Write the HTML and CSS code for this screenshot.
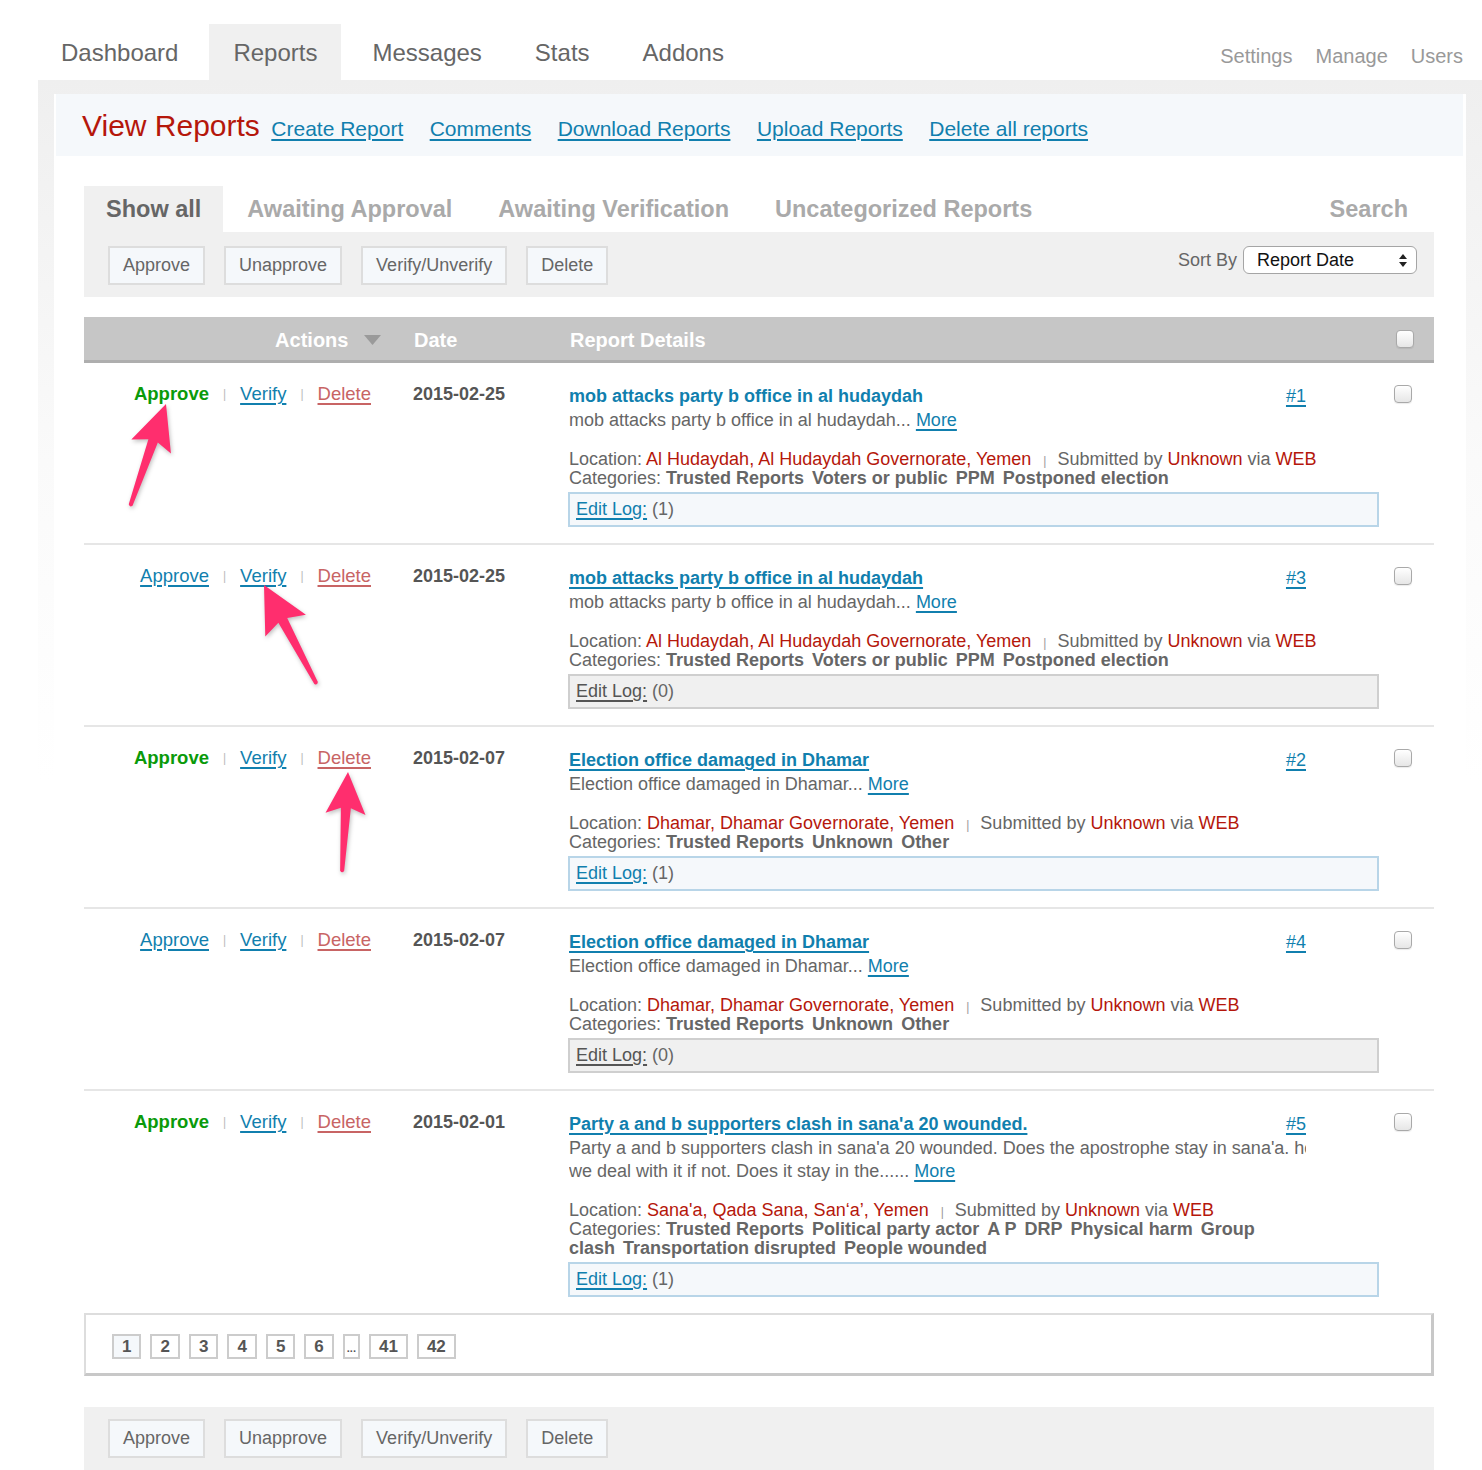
FILE: index.html
```html
<!DOCTYPE html>
<html lang="en">
<head>
<meta charset="utf-8">
<title>View Reports</title>
<link rel="stylesheet" href="styles.css">
</head>
<body>
<nav class="topnav">
  <div class="tabs">
    <a class="tab">Dashboard</a>
    <a class="tab active">Reports</a>
    <a class="tab">Messages</a>
    <a class="tab">Stats</a>
    <a class="tab">Addons</a>
  </div>
  <div class="util">
    <a>Settings</a>
    <a>Manage</a>
    <a>Users</a>
  </div>
</nav>

<div class="wrapper">
  <div class="panel">
    <div class="pagehead">
      <h1>View Reports</h1>
      <a class="hl first">Create Report</a>
      <a class="hl">Comments</a>
      <a class="hl">Download Reports</a>
      <a class="hl">Upload Reports</a>
      <a class="hl">Delete all reports</a>
    </div>

    <div class="filters">
      <a class="ftab active">Show all</a>
      <a class="ftab">Awaiting Approval</a>
      <a class="ftab">Awaiting Verification</a>
      <a class="ftab">Uncategorized Reports</a>
      <a class="ftab search">Search</a>
    </div>

    <div class="actionbar">
      <span class="btn">Approve</span>
      <span class="btn">Unapprove</span>
      <span class="btn">Verify/Unverify</span>
      <span class="btn">Delete</span>
      <div class="sort">
        <span>Sort By</span>
        <div class="select">
          <span>Report Date</span>
          <svg width="8" height="13" viewBox="0 0 8 13"><polygon points="4,0 8,5 0,5" fill="#222"/><polygon points="0,8 8,8 4,13" fill="#222"/></svg>
        </div>
      </div>
    </div>

    <div class="thead">
      <div class="th th-act">Actions <svg class="caret" width="17" height="10" viewBox="0 0 17 10"><polygon points="0,0 17,0 8.5,10" fill="#9a9a9a"/></svg></div>
      <div class="th th-date">Date</div>
      <div class="th th-det">Report Details</div>
      <div class="th th-chk"><span class="chk"></span></div>
    </div>

    <div class="row">
      <div class="acts"><span class="ok">Approve</span><span class="sep">|</span><a class="lnk">Verify</a><span class="sep">|</span><a class="del">Delete</a></div>
      <div class="date">2015-02-25</div>
      <div class="det">
        <div class="trow"><a class="title plain">mob attacks party b office in al hudaydah</a><a class="num">#1</a></div>
        <div class="desc"><div class="desc-in">mob attacks party b office in al hudaydah... <a class="lnk">More</a></div></div>
        <div class="meta">Location: <span class="red">Al Hudaydah, Al Hudaydah Governorate, Yemen</span><span class="msep">|</span>Submitted by <span class="red">Unknown</span> via <span class="red">WEB</span></div>
        <div class="cats">Categories: <b>Trusted Reports</b> <b>Voters or public</b> <b>PPM</b> <b>Postponed election</b></div>
        <div class="editlog"><a class="lnk">Edit Log:</a> (1)</div>
      </div>
      <div class="chkcell"><span class="chk"></span></div>
    </div>

    <div class="row">
      <div class="acts"><a class="lnk">Approve</a><span class="sep">|</span><a class="lnk">Verify</a><span class="sep">|</span><a class="del">Delete</a></div>
      <div class="date">2015-02-25</div>
      <div class="det">
        <div class="trow"><a class="title">mob attacks party b office in al hudaydah</a><a class="num">#3</a></div>
        <div class="desc"><div class="desc-in">mob attacks party b office in al hudaydah... <a class="lnk">More</a></div></div>
        <div class="meta">Location: <span class="red">Al Hudaydah, Al Hudaydah Governorate, Yemen</span><span class="msep">|</span>Submitted by <span class="red">Unknown</span> via <span class="red">WEB</span></div>
        <div class="cats">Categories: <b>Trusted Reports</b> <b>Voters or public</b> <b>PPM</b> <b>Postponed election</b></div>
        <div class="editlog empty"><a class="lnk">Edit Log:</a> (0)</div>
      </div>
      <div class="chkcell"><span class="chk"></span></div>
    </div>

    <div class="row">
      <div class="acts"><span class="ok">Approve</span><span class="sep">|</span><a class="lnk">Verify</a><span class="sep">|</span><a class="del">Delete</a></div>
      <div class="date">2015-02-07</div>
      <div class="det">
        <div class="trow"><a class="title">Election office damaged in Dhamar</a><a class="num">#2</a></div>
        <div class="desc"><div class="desc-in">Election office damaged in Dhamar... <a class="lnk">More</a></div></div>
        <div class="meta">Location: <span class="red">Dhamar, Dhamar Governorate, Yemen</span><span class="msep">|</span>Submitted by <span class="red">Unknown</span> via <span class="red">WEB</span></div>
        <div class="cats">Categories: <b>Trusted Reports</b> <b>Unknown</b> <b>Other</b></div>
        <div class="editlog"><a class="lnk">Edit Log:</a> (1)</div>
      </div>
      <div class="chkcell"><span class="chk"></span></div>
    </div>

    <div class="row">
      <div class="acts"><a class="lnk">Approve</a><span class="sep">|</span><a class="lnk">Verify</a><span class="sep">|</span><a class="del">Delete</a></div>
      <div class="date">2015-02-07</div>
      <div class="det">
        <div class="trow"><a class="title">Election office damaged in Dhamar</a><a class="num">#4</a></div>
        <div class="desc"><div class="desc-in">Election office damaged in Dhamar... <a class="lnk">More</a></div></div>
        <div class="meta">Location: <span class="red">Dhamar, Dhamar Governorate, Yemen</span><span class="msep">|</span>Submitted by <span class="red">Unknown</span> via <span class="red">WEB</span></div>
        <div class="cats">Categories: <b>Trusted Reports</b> <b>Unknown</b> <b>Other</b></div>
        <div class="editlog empty"><a class="lnk">Edit Log:</a> (0)</div>
      </div>
      <div class="chkcell"><span class="chk"></span></div>
    </div>

    <div class="row last">
      <div class="acts"><span class="ok">Approve</span><span class="sep">|</span><a class="lnk">Verify</a><span class="sep">|</span><a class="del">Delete</a></div>
      <div class="date">2015-02-01</div>
      <div class="det">
        <div class="trow"><a class="title">Party a and b supporters clash in sana'a 20 wounded.</a><a class="num">#5</a></div>
        <div class="desc"><div class="desc-in">Party a and b supporters clash in sana'a 20 wounded. Does the apostrophe stay in sana'a. how we deal with it if not. Does it stay in the...... <a class="lnk">More</a></div></div>
        <div class="meta">Location: <span class="red">Sana'a, Qada Sana, San‘a’, Yemen</span><span class="msep">|</span>Submitted by <span class="red">Unknown</span> via <span class="red">WEB</span></div>
        <div class="cats">Categories: <b>Trusted Reports</b> <b>Political party actor</b> <b>A P</b> <b>DRP</b> <b>Physical harm</b> <b>Group clash</b> <b>Transportation disrupted</b> <b>People wounded</b></div>
        <div class="editlog"><a class="lnk">Edit Log:</a> (1)</div>
      </div>
      <div class="chkcell"><span class="chk"></span></div>
    </div>

    <div class="pager">
      <span class="pg cur">1</span>
      <span class="pg">2</span>
      <span class="pg">3</span>
      <span class="pg">4</span>
      <span class="pg">5</span>
      <span class="pg">6</span>
      <span class="pg dots">...</span>
      <span class="pg">41</span>
      <span class="pg">42</span>
    </div>

    <div class="actionbar bottom">
      <span class="btn">Approve</span>
      <span class="btn">Unapprove</span>
      <span class="btn">Verify/Unverify</span>
      <span class="btn">Delete</span>
    </div>
  </div>
</div>

<svg class="arrows" width="1482" height="1470" viewBox="0 0 1482 1470">
  <g fill="#ff2e6e">
    <path transform="translate(166,404) rotate(19.3)" d="M0,0 L21,45 L5,39 L2,107 Q0,110 -2,107 L-5,39 L-21,45 Z"/>
    <path transform="translate(264,585) rotate(-28)" d="M0,0 L23,46 L5,40 L2,111 Q0,114 -2,111 L-5,40 L-23,46 Z"/>
    <path transform="translate(348,772) rotate(3.4)" d="M0,0 L20,42 L5,36 L2,99 Q0,102 -2,99 L-5,36 L-20,42 Z"/>
  </g>
</svg>
</body>
</html>
```
FILE: styles.css
```css
body {
  margin: 0;
  font-family: "Liberation Sans", Arial, sans-serif;
  color: #666;
  background: #fff;
  position: relative;
}
a { text-decoration: none; cursor: pointer; }

/* top navigation */
.topnav {
  display: flex;
  justify-content: space-between;
  align-items: flex-end;
  padding: 24px 19px 0 39px;
}
.tabs { display: flex; gap: 9px; }
.tab {
  height: 56px;
  line-height: 58px;
  padding: 0 22px;
  font-size: 24px;
  color: #666;
}
.tab.active { background: #f0f0f0; padding: 0 24px; }
.util {
  display: flex;
  gap: 23px;
  padding-bottom: 12px;
  font-size: 20px;
}
.util a { color: #999; }

/* wrapper */
.wrapper {
  margin-left: 38px;
  padding: 14px 16px 0;
  background: linear-gradient(#efefef 0, #fafafa 380px, #fff 700px);
}
.panel {
  background: #fff;
  padding: 0 32px 0 30px;
}
.pagehead {
  margin: 0 -29px 0 -28px;
  height: 62px;
  line-height: 64px;
  background: #f5f8fb;
  padding-left: 26px;
  white-space: nowrap;
}
.pagehead h1 {
  display: inline;
  margin: 0;
  font-size: 30px;
  font-weight: normal;
  color: #b5170b;
}
.hl {
  font-size: 21px;
  color: #117fae;
  margin-left: 22px;
  text-decoration: underline;
  text-decoration-thickness: 2px;
  text-underline-offset: 3px;
}
.hl.first { margin-left: 7px; }

/* filter tabs */
.filters {
  margin-top: 30px;
  display: flex;
  gap: 2px;
}
.ftab {
  height: 46px;
  line-height: 46px;
  padding: 0 22px;
  font-size: 23.5px;
  font-weight: bold;
  color: #aaa;
}
.ftab.active { background: #f0f0f0; color: #666; }
.ftab.search { margin-left: auto; padding-right: 26px; }

/* action bar */
.actionbar {
  background: #f0f0f0;
  display: flex;
  align-items: flex-start;
  gap: 19px;
  padding: 14px 17px 12px 24px;
}
.btn {
  height: 39px;
  box-sizing: border-box;
  border: 2px solid #ddd;
  background: #f5f8fb;
  padding: 0 13px;
  font-size: 18px;
  line-height: 35px;
  color: #666;
}
.sort {
  margin-left: auto;
  display: flex;
  align-items: center;
  gap: 6px;
  font-size: 18px;
  color: #666;
}
.select {
  width: 174px;
  height: 28px;
  box-sizing: border-box;
  border: 1px solid #a5a5a5;
  border-radius: 6px;
  background: #fff;
  display: flex;
  align-items: center;
  justify-content: space-between;
  padding: 0 9px 0 13px;
  color: #111;
  font-size: 18px;
}
.actionbar.bottom {
  margin-top: 31px;
  padding: 12px 24px 14px;
}

/* table */
.thead, .row {
  display: grid;
  grid-template-columns: 316px 155px 1fr 54px;
}
.thead {
  margin-top: 20px;
  background: #c6c6c6;
}
.th {
  height: 43px;
  line-height: 46px;
  border-bottom: 3px solid #aeaeae;
  color: #fff;
  font-size: 20px;
  font-weight: bold;
}
.th-act { text-align: right; padding-right: 19px; }
.caret { margin-left: 10px; vertical-align: 2px; }
.th-date { padding-left: 14px; }
.th-det { padding-left: 15px; }
.th-chk { padding-left: 16px; display: flex; align-items: center; }

.chk {
  display: inline-block;
  width: 18px;
  height: 18px;
  box-sizing: border-box;
  border: 1px solid #a9a9a9;
  border-radius: 4px;
  background: linear-gradient(#fff, #e6e6e6);
  box-shadow: 0 1px 1px rgba(0,0,0,0.08);
}

.row {
  padding: 21px 0 16px;
  border-bottom: 2px solid #e6e6e6;
  font-size: 18px;
}
.row.last { border-bottom: none; padding-bottom: 16px; }
.acts {
  text-align: right;
  padding-right: 29px;
  line-height: 20px;
  font-size: 18.5px;
  white-space: nowrap;
}
.ok { color: #0a9a0a; font-weight: bold; }
.sep {
  color: #bbb;
  font-size: 12px;
  line-height: 12px;
  margin: 0 14px;
  vertical-align: 2px;
}
.lnk, .del, .num, .title {
  text-decoration: underline;
  text-decoration-thickness: 2px;
  text-underline-offset: 3px;
}
.lnk { color: #117fae; }
.del { color: #c86464; }
.date {
  padding-left: 13px;
  font-weight: bold;
  color: #555;
  line-height: 20px;
}
.det { padding-left: 14px; }
.trow {
  width: 737px;
  display: flex;
  justify-content: space-between;
  align-items: baseline;
  line-height: 25px;
}
.title { font-weight: bold; color: #117fae; }
.title.plain { text-decoration: none; }
.num { color: #117fae; }
.desc {
  width: 737px;
  overflow: hidden;
  line-height: 23px;
}
.desc-in { width: 765px; }
.meta {
  margin-top: 17px;
  line-height: 20px;
  white-space: nowrap;
}
.red { color: #b5170b; }
.msep {
  color: #999;
  font-size: 12px;
  line-height: 12px;
  margin: 0 11px 0 12px;
}
.cats {
  line-height: 19px;
  width: 700px;
}
.cats b { margin-right: 3px; }
.editlog {
  margin: 4px 0 0 -1px;
  width: 811px;
  height: 35px;
  box-sizing: border-box;
  border: 2px solid #b8d5e8;
  background: #f5f8fb;
  padding-left: 6px;
  line-height: 31px;
}
.editlog.empty { background: #f0f0f0; border-color: #cfcfcf; }
.editlog.empty .lnk { color: #555; }
.chkcell { padding-left: 14px; padding-top: 1px; }

/* pager */
.pager {
  border: 2px solid #ddd;
  border-right: 3px solid #c8c8c8;
  border-bottom: 3px solid #c8c8c8;
  padding: 19px 26px 14px;
  display: flex;
  gap: 9px;
}
.pg {
  height: 25px;
  box-sizing: border-box;
  border: 2px solid #ccc;
  padding: 0 8px;
  font-size: 17px;
  font-weight: bold;
  line-height: 21px;
  color: #555;
}
.pg.cur { background: #f5f8fb; }
.pg.dots { padding: 0 2px; font-size: 11px; line-height: 25px; }

/* annotation arrows */
.arrows {
  position: absolute;
  top: 0;
  left: 0;
  pointer-events: none;
  filter: drop-shadow(1px 2px 2px rgba(0,0,0,0.25));
}
```
